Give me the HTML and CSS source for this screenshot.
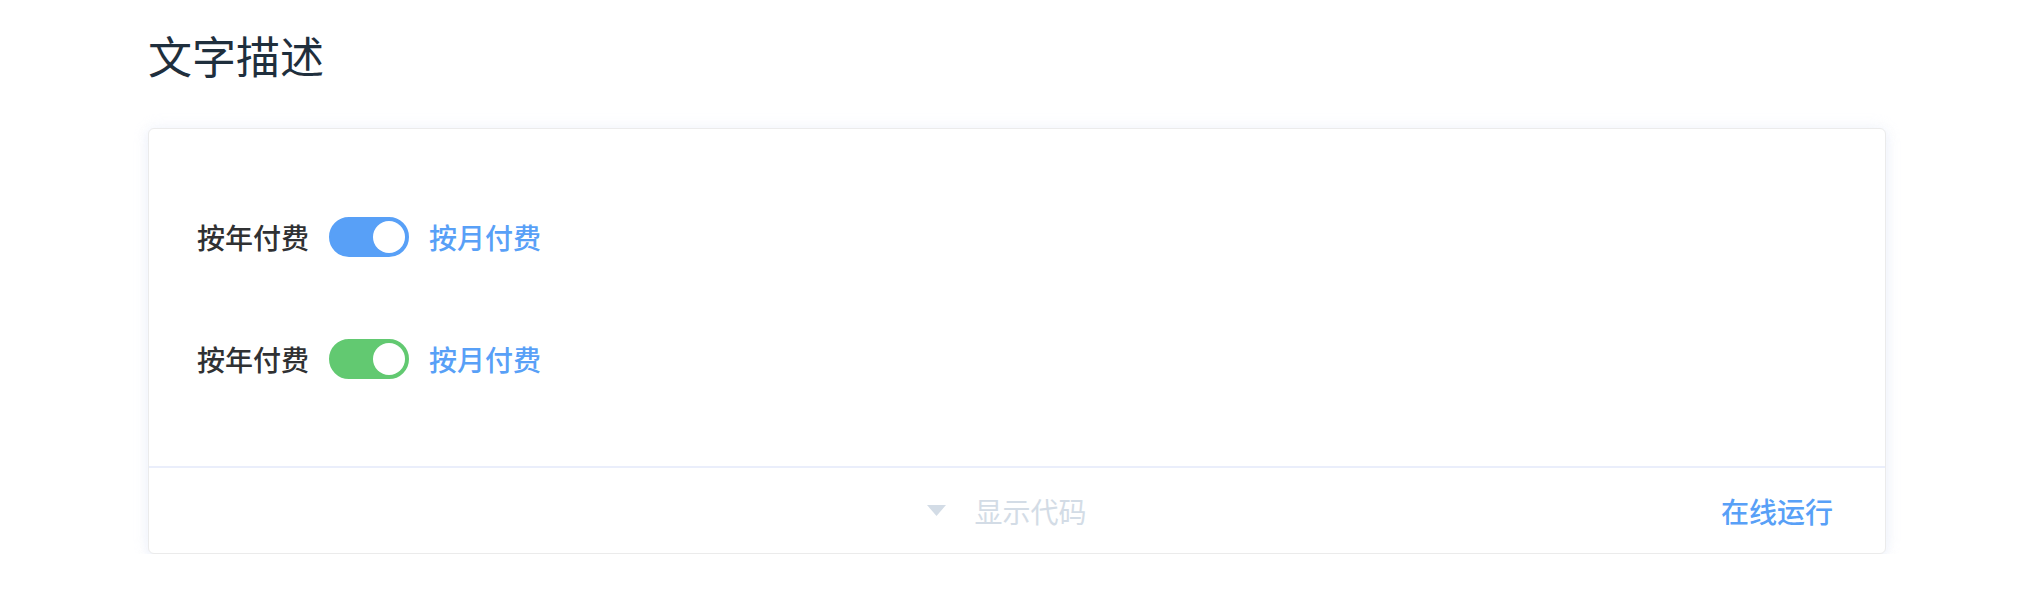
FILE: index.html
```html
<!DOCTYPE html>
<html>
<head>
  <meta charset="UTF-8">
  <meta name="viewport" content="width=device-width, initial-scale=1.0">
  <title>Switch 文字描述</title>
  <link rel="stylesheet" href="styles.css">
</head>
<body>
  <div class="page">
    <h3 class="section-title">文字描述</h3>

    <div class="demo-block">
      <div class="demo-source">
        <div class="switch-row">
          <span class="switch-label">按年付费</span>
          <span class="switch is-checked"><span class="switch-core"></span></span>
          <span class="switch-label is-active">按月付费</span>
        </div>
        <div class="switch-row">
          <span class="switch-label">按年付费</span>
          <span class="switch is-checked green"><span class="switch-core"></span></span>
          <span class="switch-label is-active">按月付费</span>
        </div>
      </div>

      <div class="demo-control">
        <div></div>
        <div class="control-toggle">
          <svg class="caret" width="19" height="11" viewBox="0 0 19 11">
            <path d="M0 0 L19 0 L9.5 11 Z" fill="#d3dce6"/>
          </svg>
          <span>显示代码</span>
        </div>
        <a class="control-run">在线运行</a>
      </div>
    </div>
  </div>
</body>
</html>
```

FILE: styles.css
```css
    body {
      margin: 0;
      padding: 0;
      background: #fff;
      font-family: "Noto Sans CJK SC", "Noto Sans", sans-serif;
    }

    .page {
      width: 1738px;
      margin-left: 148px;
      padding-top: 22px;
    }

    .section-title {
      margin: 0 0 40px 0;
      font-size: 44px;
      line-height: 66px;
      font-weight: normal;
      color: #1f2f3d;
    }

    .demo-block {
      border: 1px solid #ebebeb;
      border-radius: 6px;
      box-shadow: 0 0 16px 0 rgba(232, 237, 250, 0.6), 0 4px 8px 0 rgba(232, 237, 250, 0.5);
      background: #fff;
    }

    .demo-source {
      display: flex;
      flex-direction: column;
      gap: 82px;
      padding: 88px 48px 87px 48px;
    }

    .switch-row {
      display: flex;
      align-items: center;
      height: 40px;
    }

    .switch-label {
      font-size: 28px;
      line-height: 40px;
      font-weight: 500;
      color: #303133;
    }

    .switch-label.is-active {
      color: #58a0f7;
    }

    .switch {
      margin: 0 20px;
      display: inline-flex;
    }

    .switch-core {
      position: relative;
      box-sizing: border-box;
      width: 80px;
      height: 40px;
      border-radius: 20px;
      border: 2px solid #dcdfe6;
      background: #dcdfe6;
    }

    .switch-core::after {
      content: "";
      position: absolute;
      top: 2px;
      left: 2px;
      width: 32px;
      height: 32px;
      border-radius: 50%;
      background: #fff;
    }

    .switch.is-checked .switch-core {
      border-color: #58a0f7;
      background: #58a0f7;
    }

    .switch.is-checked.green .switch-core {
      border-color: #62c971;
      background: #62c971;
    }

    .switch.is-checked .switch-core::after {
      left: 42px;
    }

    .demo-control {
      box-sizing: border-box;
      height: 87px;
      border-top: 2px solid #eaeefb;
      display: grid;
      grid-template-columns: 1fr auto 1fr;
      align-items: center;
    }

    .control-toggle {
      display: flex;
      align-items: center;
      gap: 28px;
      padding-right: 20px;
      font-size: 28px;
      color: #d3dce6;
    }

    .control-run {
      justify-self: end;
      padding-right: 52px;
      font-size: 28px;
      font-weight: 500;
      color: #58a0f7;
      cursor: pointer;
    }
```
